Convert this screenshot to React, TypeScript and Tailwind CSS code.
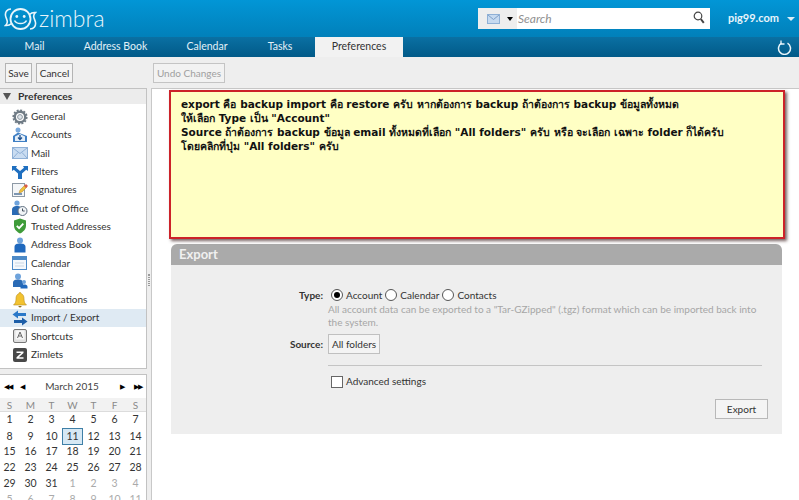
import React from 'react';

const tabs = [
  { label: 'Mail', width: 'w-[69px]' },
  { label: 'Address Book', width: 'w-[93px]' },
  { label: 'Calendar', width: 'w-[90px]' },
  { label: 'Tasks', width: 'w-[56px]' },
];

function GearIcon() {
  return (
    <svg width="16" height="16" viewBox="0 0 16 16">
      <circle cx="8" cy="8" r="5.2" fill="none" stroke="#6f7b85" strokeWidth="2.4" />
      <circle cx="8" cy="8" r="6.7" fill="none" stroke="#6f7b85" strokeWidth="1.8" strokeDasharray="2 1.5" />
      <circle cx="8" cy="8" r="2.4" fill="#dfe5ea" stroke="#8b97a1" />
    </svg>
  );
}

function AccountsIcon() {
  return (
    <svg width="16" height="16" viewBox="0 0 16 16">
      <circle cx="6" cy="3" r="2.5" fill="#7aa9dc" />
      <path d="M1 15V9l5-3.5L15 9v6z" fill="#3f7fc4" />
      <path d="M3 14V9.5L8 7l5 2.5V14z" fill="#e4eef8" />
      <path d="M8 8v4M6 10.5l2 2 2-2" fill="none" stroke="#1c4f8d" strokeWidth="1.3" />
    </svg>
  );
}

function MailIcon() {
  return (
    <svg width="16" height="14" viewBox="0 0 16 14">
      <rect x="0.5" y="1.5" width="15" height="11" fill="#c9dcf1" stroke="#8fb0d6" />
      <path d="M1 2l7 5.500L15 2M1 12l5-5.500M15 12l-5-5.500" fill="none" stroke="#8fb0d6" />
    </svg>
  );
}

function FiltersIcon() {
  return (
    <svg width="16" height="16" viewBox="0 0 16 16">
      <path d="M0 2h5L4 3.700 8 7l4-3.300L11 2h5v5l-1.800-1.200L10 9.500V15H6V9.500L1.800 5.800 0 7z" fill="#1f6fc0" />
    </svg>
  );
}

function SignaturesIcon() {
  return (
    <svg width="16" height="16" viewBox="0 0 16 16">
      <rect x="0.500" y="1.500" width="12" height="13" fill="#f4f6f8" stroke="#8d99a5" />
      <path d="M2 12h8" stroke="#4a6d94" strokeWidth="1.400" />
      <path d="M7 11l1-3 5-5 2 2-5 5z" fill="#eec13d" stroke="#b5852a" strokeWidth="0.500" />
      <path d="M12 4l2-2 2 2-2 2z" fill="#d85a4c" />
    </svg>
  );
}

function OutOfOfficeIcon() {
  return (
    <svg width="16" height="16" viewBox="0 0 16 16">
      <circle cx="5" cy="3" r="2.600" fill="#6ea3dc" />
      <path d="M0 15v-5c0-3 2-4 5-4s5 1 5 4v5z" fill="#2a6bb5" />
      <circle cx="10.500" cy="11" r="4.500" fill="#f1f4f7" stroke="#5f6f80" />
      <path d="M10.500 8.500V11h2.200" fill="none" stroke="#44525f" />
    </svg>
  );
}

function ShieldIcon() {
  return (
    <svg width="16" height="16" viewBox="0 0 16 16">
      <path d="M8 0.500l6 2v5c0 4-3 6.500-6 8-3-1.500-6-4-6-8v-5z" fill="#3f9c3a" />
      <path d="M4.800 7.800l2.300 2.400 4.200-4.600" fill="none" stroke="#fff" strokeWidth="1.800" />
    </svg>
  );
}

function PersonIcon() {
  return (
    <svg width="14" height="16" viewBox="0 0 14 16">
      <circle cx="7" cy="3.500" r="3" fill="#6ea3dc" />
      <path d="M1.500 15.500V10c0-2.800 2.300-3.500 5.500-3.500s5.500.7 5.500 3.500v5.500z" fill="#1f68bd" />
    </svg>
  );
}

function CalendarIcon() {
  return (
    <svg width="16" height="16" viewBox="0 0 16 16">
      <rect x="0.500" y="1.500" width="14" height="13" fill="#f4f8fc" stroke="#4d8ac7" />
      <rect x="1" y="2" width="13" height="3" fill="#4d8ac7" />
      <path d="M3 8h9M3 11h9" stroke="#c9d6e3" />
    </svg>
  );
}

function SharingIcon() {
  return (
    <svg width="16" height="16" viewBox="0 0 16 16">
      <circle cx="6" cy="3.500" r="3" fill="#6ea3dc" />
      <path d="M1 14v-4c0-2.800 2-3.500 5-3.500s5 .7 5 3.500v4z" fill="#2a6bb5" />
      <circle cx="12" cy="9" r="2" fill="#6ea3dc" />
      <path d="M8.500 15.500v-1.800c0-1.700 1.500-2.200 3.500-2.200s3.500.5 3.500 2.200v1.800z" fill="#1f68bd" />
    </svg>
  );
}

function BellIcon() {
  return (
    <svg width="14" height="16" viewBox="0 0 14 16">
      <path d="M7 0.500c.8 0 1.200.5 1.200 1.200C10.500 2.500 11 4.500 11 7c0 3 .8 4.500 2.500 6h-13C2.200 11.500 3 10 3 7c0-2.500.5-4.500 2.800-5.300C5.800 1 6.200.5 7 .5z" fill="#f2c230" stroke="#b88f22" strokeWidth="0.600" />
      <path d="M5 14h4l-2 1.800z" fill="#8d6f20" />
    </svg>
  );
}

function ImportExportIcon() {
  return (
    <svg width="16" height="16" viewBox="0 0 16 16">
      <path d="M6 0.500v2.500h8v3H6v2.500L0.500 4.500z" fill="#2a78c8" />
      <path d="M10 7.500V10H2v3h8v2.500l5.500-4z" fill="#1d5ea8" />
    </svg>
  );
}

function ShortcutsIcon() {
  return (
    <svg width="14" height="14" viewBox="0 0 14 14">
      <rect x="0.500" y="0.500" width="13" height="13" rx="1.500" fill="#dfdfdf" stroke="#777" />
      <rect x="2.500" y="1.500" width="9" height="9" fill="#f7f7f7" />
      <path d="M4.500 9L7 3l2.500 6M5.500 7h3" fill="none" stroke="#666" />
    </svg>
  );
}

function ZimletsIcon() {
  return (
    <svg width="14" height="14" viewBox="0 0 14 14">
      <rect width="14" height="14" rx="2" fill="#484848" />
      <path d="M3.500 3.500h7v1.400L5.800 9.300h4.700v1.400h-7V9.300l4.700-4.400H3.500z" fill="#fff" />
    </svg>
  );
}

function ZimbraFace() {
  return (
    <svg width="33" height="24" viewBox="0 0 33 24" fill="none" stroke="#e8f5fb">
      <path d="M7 2C3 2 1 5 1.500 8.500c.3 2.500 2 4.500 1.800 6.500-.1 1.500-.8 2.600-1.800 3.500 3 .3 4.500-.5 6-2" strokeWidth="1.600" />
      <path d="M26 22c4 0 6-3 5.500-6.500-.3-2.500-2-4.500-1.800-6.500.1-1.500.8-2.600 1.800-3.500-3-.3-4.500.5-6 2" strokeWidth="1.600" />
      <circle cx="16.500" cy="12" r="10" strokeWidth="1.800" />
      <circle cx="12.800" cy="9.500" r="1.400" fill="#e8f5fb" stroke="none" />
      <circle cx="20.200" cy="9.500" r="1.400" fill="#e8f5fb" stroke="none" />
      <path d="M10.500 13.500c2 4 10 4 12 0" strokeWidth="1.600" />
    </svg>
  );
}

const prefItems = [
  { label: 'General', icon: <GearIcon /> },
  { label: 'Accounts', icon: <AccountsIcon /> },
  { label: 'Mail', icon: <MailIcon /> },
  { label: 'Filters', icon: <FiltersIcon /> },
  { label: 'Signatures', icon: <SignaturesIcon /> },
  { label: 'Out of Office', icon: <OutOfOfficeIcon /> },
  { label: 'Trusted Addresses', icon: <ShieldIcon /> },
  { label: 'Address Book', icon: <PersonIcon /> },
  { label: 'Calendar', icon: <CalendarIcon /> },
  { label: 'Sharing', icon: <SharingIcon /> },
  { label: 'Notifications', icon: <BellIcon /> },
  { label: 'Import / Export', icon: <ImportExportIcon />, selected: true },
  { label: 'Shortcuts', icon: <ShortcutsIcon /> },
  { label: 'Zimlets', icon: <ZimletsIcon /> },
];

const weeks = [
  ['1', '2', '3', '4', '5', '6', '7'],
  ['8', '9', '10', '11', '12', '13', '14'],
  ['15', '16', '17', '18', '19', '20', '21'],
  ['22', '23', '24', '25', '26', '27', '28'],
  ['29', '30', '31', '1', '2', '3', '4'],
  ['5', '6', '7', '8', '9', '10', '11'],
];

function Radio({ checked }: { checked?: boolean }) {
  return (
    <span className="flex h-[12px] w-[12px] shrink-0 items-center justify-center rounded-full border border-[#555] bg-white">
      {checked && <span className="h-[6px] w-[6px] rounded-full bg-black" />}
    </span>
  );
}

function ToolButton({ label, width, disabled }: { label: string; width: string; disabled?: boolean }) {
  return (
    <button
      className={
        disabled
          ? `${width} flex h-[20px] items-center justify-center whitespace-nowrap border border-[#c4c4c4] bg-[#f2f2f2] text-[10px] text-[#a0a0a0]`
          : `${width} flex h-[20px] items-center justify-center whitespace-nowrap border border-[#b4b4b4] bg-[#f4f4f4] text-[10px] text-[#333]`
      }
    >
      {label}
    </button>
  );
}

export default function App() {
  return (
    <div className="relative h-[500px] w-[799px] overflow-hidden bg-[#eeeeee] font-['Lato',sans-serif] text-[#333]">
      {/* Header */}
      <div className="flex h-[37px] items-center bg-gradient-to-b from-[#0296d6] to-[#0180ba]">
        <div className="ml-[4px] flex w-[474px] items-center gap-[2px]">
          <ZimbraFace />
          <span className="text-[23px] font-light leading-none text-[#e8f5fb]">zimbra</span>
        </div>
        <div className="flex h-[21px] w-[232px] items-center bg-white">
          <div className="flex h-full w-[39px] items-center bg-[#eeeeee] pl-[9px]">
            <svg width="13" height="10" viewBox="0 0 13 10">
              <rect x="0.500" y="0.500" width="12" height="9" fill="#c6daf0" stroke="#8fb0d6" />
              <path d="M1 1l5.500 4.500L12 1" fill="none" stroke="#7f9fc7" />
            </svg>
            <span className="ml-[7px] h-0 w-0 border-x-[3px] border-t-[4px] border-x-transparent border-t-black" />
          </div>
          <span className="ml-[1px] flex-1 text-[12px] italic text-[#909090]">Search</span>
          <svg width="12" height="13" viewBox="0 0 12 13" className="mb-[2px] mr-[5px]" fill="none" stroke="#444">
            <circle cx="5" cy="5" r="3.800" strokeWidth="1.200" />
            <path d="M7.800 8l3 3.800" strokeWidth="2" />
          </svg>
        </div>
        <span className="ml-[18px] text-[11px] font-bold text-[#e8f5fb]">pig99.com</span>
        <span className="ml-[8px] h-0 w-0 border-x-[4px] border-t-[4px] border-x-transparent border-t-[#d8eef8]" />
      </div>

      {/* Tabs */}
      <div className="flex h-[20px] items-stretch bg-gradient-to-b from-[#0a70a3] to-[#025a88]">
        {tabs.map((tab) => (
          <div key={tab.label} className={`${tab.width} flex items-center justify-center text-[10.500px] text-[#e3f1f8]`}>
            {tab.label}
          </div>
        ))}
        <div className="ml-[7px] flex w-[88px] items-center justify-center bg-[#f2f2f2] text-[10.500px] text-[#333]">Preferences</div>
        <div className="flex flex-1 items-center justify-end pr-[7px]">
          <svg width="15" height="15" viewBox="0 0 15 15" fill="none" stroke="#e8f5fb" strokeWidth="1.500">
            <path d="M4.500 3.200a6 6 0 1 0 6 0" />
            <path d="M4 0.500v3.500h3.500" strokeWidth="1.300" />
          </svg>
        </div>
      </div>

      {/* Toolbar */}
      <div className="flex h-[31px] items-start bg-[#eeeeee] pl-[5px] pt-[6px]">
        <div className="flex w-[148px] gap-[4px]">
          <ToolButton label="Save" width="w-[27px]" />
          <ToolButton label="Cancel" width="w-[37px]" />
        </div>
        <ToolButton label="Undo Changes" width="w-[72px]" disabled />
      </div>

      {/* Body */}
      <div className="flex h-[412px]">
        <div className="flex w-[147px] shrink-0 flex-col gap-[5px]">
          <div className="h-[281px] border-y border-r border-[#c2c2c2] bg-white">
            <div className="flex h-[15px] items-center bg-[#ececec] pl-[3px] text-[10.300px] font-bold text-[#333]">
              <span className="mr-[7px] h-0 w-0 border-x-[4px] border-t-[7px] border-x-transparent border-t-[#555]" />
              Preferences
            </div>
            <div className="pt-[3.500px]">
              {prefItems.map((item) => (
                <div
                  key={item.label}
                  className={
                    item.selected
                      ? 'flex h-[18.300px] items-center bg-[#dfeaf3] text-[10px] text-[#333]'
                      : 'flex h-[18.300px] items-center text-[10px] text-[#333]'
                  }
                >
                  <span className="flex w-[31px] shrink-0 justify-center pl-[9px]">{item.icon}</span>
                  {item.label}
                </div>
              ))}
            </div>
          </div>
          <div className="flex-1 overflow-hidden border-t border-r border-[#c2c2c2] bg-white">
            <div className="flex h-[23px] items-center px-[4px] text-[10px]">
              <span className="flex w-[23px] items-center gap-[8px]">
                <span className="text-[7px] leading-none tracking-[-1px] text-black">◀◀</span>
                <span className="text-[7px] leading-none text-black">◀</span>
              </span>
              <span className="flex-1 text-center text-[#444]">March 2015</span>
              <span className="flex w-[25px] items-center justify-end gap-[9px]">
                <span className="text-[7px] leading-none text-black">▶</span>
                <span className="text-[7px] leading-none tracking-[-1px] text-black">▶▶</span>
              </span>
            </div>
            <div className="-ml-[1px] grid h-[14px] grid-cols-7 items-center border-b border-[#dcdcdc] bg-[#f2f2f2] text-center text-[10px] text-[#8a8a8a]">
              {['S', 'M', 'T', 'W', 'T', 'F', 'S'].map((day, i) => (
                <span key={i}>{day}</span>
              ))}
            </div>
            <div className="-ml-[1px]">
              {weeks.map((week, w) => (
                <div key={w} className="grid h-[16px] grid-cols-7 items-center text-center text-[10.500px]">
                  {week.map((day, d) => {
                    const dim = (w === 4 && d > 2) || w === 5;
                    const today = w === 1 && d === 3;
                    return (
                      <span
                        key={d}
                        className={
                          today
                            ? 'mx-auto flex h-[17px] w-[21px] items-center justify-center border border-[#3f7fa6] bg-[#d6e8f4] text-[#333]'
                            : dim
                              ? 'text-[#aaaaaa]'
                              : 'text-[#333]'
                        }
                      >
                        {day}
                      </span>
                    );
                  })}
                </div>
              ))}
            </div>
          </div>
        </div>

        {/* Splitter */}
        <div className="flex w-[4px] shrink-0 items-center justify-center">
          <span className="mb-[28px] h-[12px] w-[2px] border-x border-dotted border-[#9a9a9a]" />
        </div>

        {/* Content */}
        <div className="flex-1 border-l border-t border-[#c8c8c8] bg-white pl-[19px] pt-[155px]">
          <div className="w-[611px]">
            <div className="flex h-[21px] items-center rounded-t-[6px] bg-[#aaaaaa] pl-[8px] text-[13px] font-bold text-[#f0f0f0]">
              Export
            </div>
            <div className="h-[169px] bg-[#eeeeee] pt-[23px] text-[10px]">
              <div className="grid grid-cols-[157px_1fr] pr-[20px]">
                <div className="pr-[5px] text-right font-bold leading-[14px]">Type:</div>
                <div>
                  <div className="flex h-[14px] items-center pl-[3px]">
                    <Radio checked />
                    <span className="ml-[3px] mr-[3px]">Account</span>
                    <Radio />
                    <span className="ml-[3px] mr-[3px]">Calendar</span>
                    <Radio />
                    <span className="ml-[3px]">Contacts</span>
                  </div>
                  <p className="mt-[1px] leading-[13px] text-[#a6a6a6]">
                    All account data can be exported to a "Tar-GZipped" (.tgz) format which can be imported back into the system.
                  </p>
                </div>
                <div className="flex items-center justify-end pr-[5px] pt-[5px] font-bold">Source:</div>
                <div className="mt-[5px]">
                  <button className="flex h-[20px] w-[52px] items-center justify-center border border-[#c0c0c0] bg-[#f4f4f4] text-[10px] text-[#333]">
                    All folders
                  </button>
                </div>
                <div />
                <div className="mt-[11px] border-t border-[#c4c4c4] pt-[8px]">
                  <div className="flex items-center pl-[3px]">
                    <span className="h-[12px] w-[12px] border border-[#666] bg-white" />
                    <span className="ml-[3px]">Advanced settings</span>
                  </div>
                </div>
              </div>
              <div className="mt-[10px] flex justify-end pr-[14px]">
                <button className="flex h-[20px] w-[53px] items-center justify-center border border-[#b8b8b8] bg-[#f4f4f4] text-[10px] text-[#333]">
                  Export
                </button>
              </div>
            </div>
          </div>
        </div>
      </div>

      {/* Annotation drawn over the page */}
      <div className="absolute left-[169px] top-[90px] h-[149px] w-[616px] border-2 border-[#cc2229] bg-[#ffffc4] pl-[10px] pt-[5px] font-['DejaVu_Sans','Noto_Sans',sans-serif] text-[10.500px] font-bold leading-[14px] text-[#111] shadow-[2px_2px_3px_rgba(60,30,30,0.7)]">
        <div>export คือ backup import คือ restore ครับ หากต้องการ backup ถ้าต้องการ backup ข้อมูลทั้งหมด</div>
        <div>ให้เลือก Type เป็น "Account"</div>
        <div>Source ถ้าต้องการ backup ข้อมูล email ทั้งหมดที่เลือก "All folders" ครับ หรือ จะเลือก เฉพาะ folder ก็ได้ครับ</div>
        <div>โดยคลิกที่ปุ่ม "All folders" ครับ</div>
      </div>
    </div>
  );
}
